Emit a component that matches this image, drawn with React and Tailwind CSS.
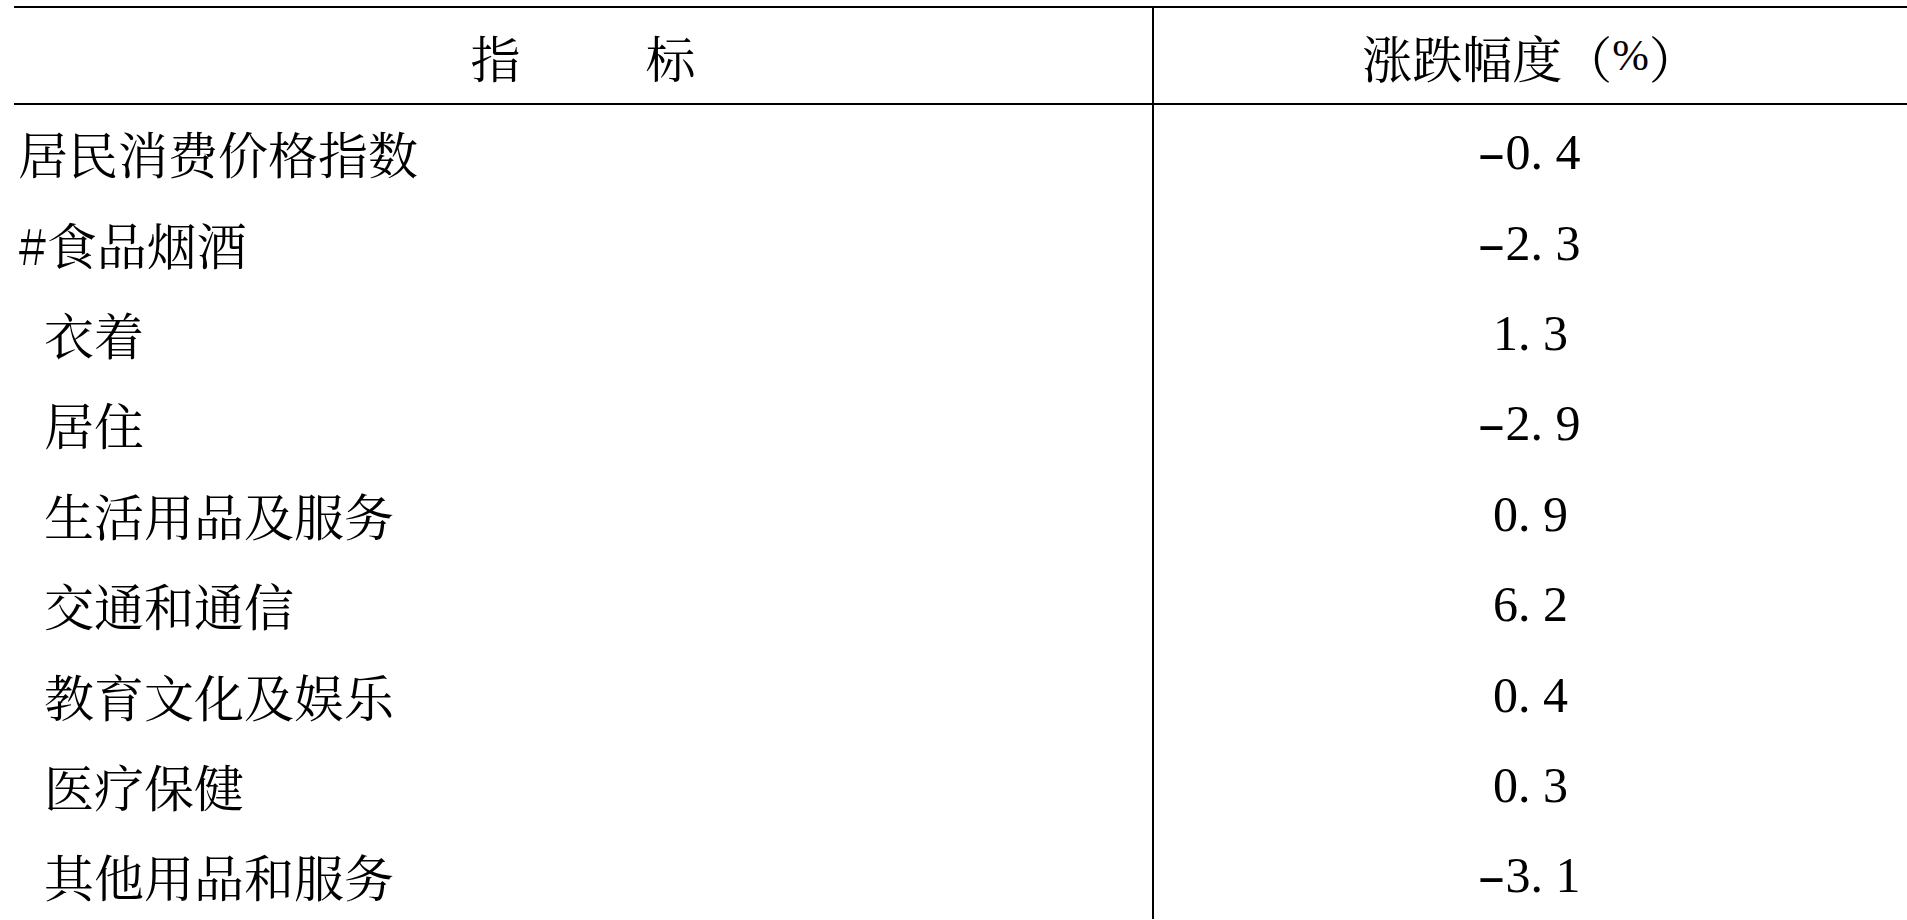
const rows = [
  { name: '居民消费价格指数', value: '-0.4' },
  { name: '#食品烟酒', value: '-2.3' },
  { name: '衣着', value: '1.3', sub: true },
  { name: '居住', value: '-2.9', sub: true },
  { name: '生活用品及服务', value: '0.9', sub: true },
  { name: '交通和通信', value: '6.2', sub: true },
  { name: '教育文化及娱乐', value: '0.4', sub: true },
  { name: '医疗保健', value: '0.3', sub: true },
  { name: '其他用品和服务', value: '-3.1', sub: true },
];

const cjk = "font-['Noto_Serif_CJK_SC','Noto_Sans_CJK_SC',serif]";

// each character in a half-width cell, like the SimSun digits in the source
const Num = ({ text }) => (
  <span className="flex font-['Liberation_Serif',serif] text-[50px] leading-none">
    {text.split('').map((c, i) =>
      c === '-' ? (
        <span key={i} className="inline-block w-[25px] text-right">
          <span className="inline-block scale-x-[1.7] origin-right">-</span>
        </span>
      ) : (
        <span key={i} className="inline-block w-[25px] text-left">
          {c}
        </span>
      )
    )}
  </span>
);

export default function App() {
  return (
    <div className="min-h-screen bg-white text-black pt-[6px] pl-[14px] overflow-hidden">
      <div className={`border-t-2 border-black ${cjk}`}>
        <div className="flex h-[97px] border-b-2 border-black">
          <div className="w-[1138px] flex items-center justify-center gap-[125px] text-[50px] leading-none">
            <span>指</span>
            <span>标</span>
          </div>
          <div className="flex-1 border-l-2 border-black flex items-center justify-center text-[50px] leading-none">
            <span>涨跌幅度（</span>
            <span className="font-['Liberation_Serif',serif] text-[44px]">%</span>
            <span>）</span>
          </div>
        </div>
        {rows.map((r) => (
          <div key={r.name} className="flex h-[90.4px]">
            <div
              className={`w-[1138px] flex items-center pt-[4px] text-[50px] leading-none ${
                r.sub ? 'pl-[30px]' : 'pl-[4px]'
              }`}
            >
              {r.name}
            </div>
            <div className="flex-1 border-l-2 border-black flex items-center justify-center pt-[4px]">
              <Num text={r.value} />
            </div>
          </div>
        ))}
      </div>
    </div>
  );
}
